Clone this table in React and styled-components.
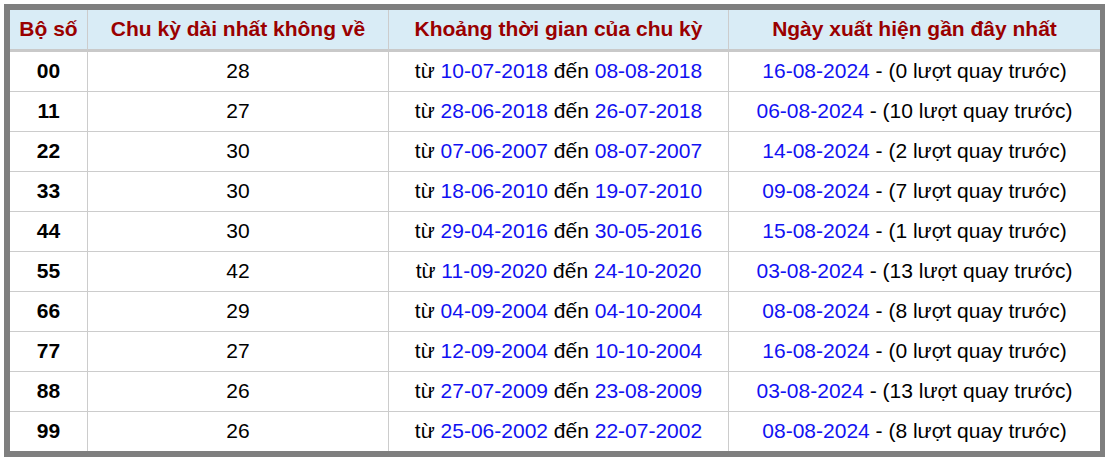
import React from "react";
import styled, { createGlobalStyle } from "styled-components";

const rows = [
  ["00", 28, "10-07-2018", "08-08-2018", "16-08-2024", 0],
  ["11", 27, "28-06-2018", "26-07-2018", "06-08-2024", 10],
  ["22", 30, "07-06-2007", "08-07-2007", "14-08-2024", 2],
  ["33", 30, "18-06-2010", "19-07-2010", "09-08-2024", 7],
  ["44", 30, "29-04-2016", "30-05-2016", "15-08-2024", 1],
  ["55", 42, "11-09-2020", "24-10-2020", "03-08-2024", 13],
  ["66", 29, "04-09-2004", "04-10-2004", "08-08-2024", 8],
  ["77", 27, "12-09-2004", "10-10-2004", "16-08-2024", 0],
  ["88", 26, "27-07-2009", "23-08-2009", "03-08-2024", 13],
  ["99", 26, "25-06-2002", "22-07-2002", "08-08-2024", 8],
];

const App = () => {
  return (
    <>
      <GlobalStyle />
      <Page>
        <Frame>
          <Table>
            <colgroup>
              <col style={{ width: 78 }} />
              <col style={{ width: 301 }} />
              <col style={{ width: 340 }} />
              <col style={{ width: 371 }} />
            </colgroup>
            <thead>
              <tr>
                <Th>Bộ số</Th>
                <Th>Chu kỳ dài nhất không về</Th>
                <Th>Khoảng thời gian của chu kỳ</Th>
                <Th $last>Ngày xuất hiện gần đây nhất</Th>
              </tr>
            </thead>
            <tbody>
              {rows.map(([pair, len, from, to, last, ago], i) => (
                <Row key={pair} $final={i === rows.length - 1}>
                  <Td $bold>{pair}</Td>
                  <Td>{len}</Td>
                  <Td>
                    từ <DateText>{from}</DateText> đến <DateText>{to}</DateText>
                  </Td>
                  <Td $last>
                    <DateText>{last}</DateText> - ({ago} lượt quay trước)
                  </Td>
                </Row>
              ))}
            </tbody>
          </Table>
        </Frame>
      </Page>
    </>
  );
};

export default App;

const GlobalStyle = createGlobalStyle`
  body {
    margin: 0;
    background: #ffffff;
    font-family: "Liberation Sans", Arial, sans-serif;
  }
`;

const Page = styled.div`
  padding: 4px 0 0 4px;
`;

const Frame = styled.div`
  width: 1090px;
  border-style: solid;
  border-color: #7f7f7f;
  border-width: 6px 5px 6px 6px;
`;

const Table = styled.table`
  width: 1090px;
  table-layout: fixed;
  border-collapse: separate;
  border-spacing: 0;
`;

const Th = styled.th`
  height: 37px;
  padding: 0 0 2px;
  background: #d9ecf6;
  color: #9a0000;
  font-size: 21px;
  font-weight: bold;
  text-align: center;
  vertical-align: middle;
  border-bottom: 3px solid #c9c9c9;
  border-right: ${(p) => (p.$last ? "none" : "1px solid #cccccc")};
  white-space: nowrap;
`;

const Row = styled.tr`
  td {
    border-bottom: ${(p) => (p.$final ? "none" : "1px solid #cccccc")};
  }
`;

const Td = styled.td`
  height: 37px;
  padding: 0 0 2px;
  color: #000000;
  font-size: 21px;
  font-weight: ${(p) => (p.$bold ? "bold" : "normal")};
  text-align: center;
  vertical-align: middle;
  border-right: ${(p) => (p.$last ? "none" : "1px solid #cccccc")};
  white-space: nowrap;
`;

const DateText = styled.span`
  color: #1212f2;
`;
